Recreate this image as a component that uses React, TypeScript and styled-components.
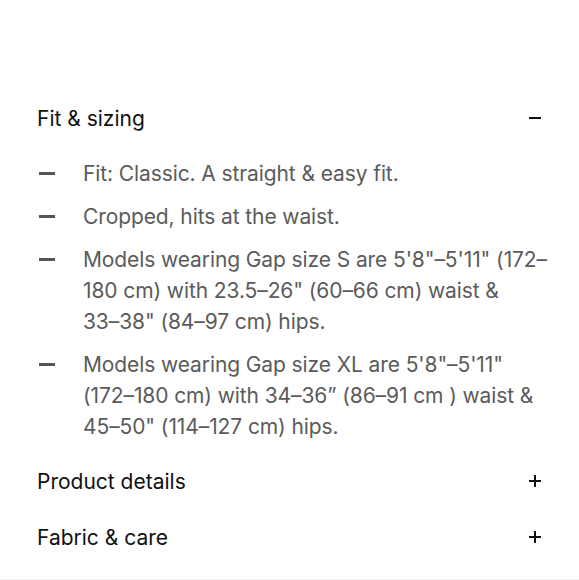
import React from "react";
import styled, { createGlobalStyle } from "styled-components";

const Global = createGlobalStyle`
  html, body { margin: 0; padding: 0; background: #fff; }
  body { font-family: Inter, "Liberation Sans", Arial, sans-serif; -webkit-font-smoothing: antialiased; }
`;

const Page = styled.div`
  width: 579px;
  height: 580px;
  box-sizing: border-box;
  border-bottom: 1px solid #efefef;
  padding: 90px 37px 0 37px;
  display: flex;
  flex-direction: column;
`;

const Section = styled.section`
  display: flex;
  flex-direction: column;
`;

const Header = styled.div`
  height: 56px;
  display: flex;
  align-items: center;
  justify-content: space-between;
`;

const Title = styled.h3`
  margin: 0;
  font-size: 21px;
  font-weight: 400;
  color: #111;
`;

const Toggle = styled.span<{ $open?: boolean }>`
  position: relative;
  width: 12px;
  height: 12px;
  margin-right: 1px;
  &::before, &::after {
    content: "";
    position: absolute;
    background: #111;
  }
  &::before {
    left: 0; right: 0; top: 5px; height: 2.4px;
  }
  &::after {
    display: ${(p) => (p.$open ? "none" : "block")};
    top: 0; bottom: 0; left: 5px; width: 2.4px;
  }
`;

const List = styled.ul`
  list-style: none;
  margin: 0 -16px 0 0;
  padding: 12px 0 11px 0;
  display: flex;
  flex-direction: column;
  gap: 12px;
`;

const Item = styled.li`
  display: grid;
  grid-template-columns: 46px 1fr;
  font-size: 21px;
  line-height: 31px;
  color: #5b5b5b;
  letter-spacing: -0.1px;
`;

const Dash = styled.span`
  display: flex;
  align-items: center;
  height: 31px;
  &::before {
    content: "";
    width: 16px;
    height: 2.4px;
    margin-left: 2px;
    background: #555;
  }
`;

const Line = styled.span`
  display: block;
`;

const items: string[][] = [
  ["Fit: Classic. A straight & easy fit."],
  ["Cropped, hits at the waist."],
  [
    "Models wearing Gap size S are 5'8\"–5'11\" (172–",
    "180 cm) with 23.5–26\" (60–66 cm) waist &",
    "33–38\" (84–97 cm) hips.",
  ],
  [
    "Models wearing Gap size XL are 5'8\"–5'11\"",
    "(172–180 cm) with 34–36” (86–91 cm ) waist &",
    "45–50\" (114–127 cm) hips.",
  ],
];

export default function App() {
  return (
    <>
      <Global />
      <Page>
        <Section>
          <Header>
            <Title>Fit &amp; sizing</Title>
            <Toggle $open />
          </Header>
          <List>
            {items.map((lines, i) => (
              <Item key={i}>
                <Dash />
                <span>
                  {lines.map((l, j) => (
                    <Line key={j}>{l}</Line>
                  ))}
                </span>
              </Item>
            ))}
          </List>
        </Section>
        <Section>
          <Header>
            <Title>Product details</Title>
            <Toggle />
          </Header>
        </Section>
        <Section>
          <Header>
            <Title>Fabric &amp; care</Title>
            <Toggle />
          </Header>
        </Section>
      </Page>
    </>
  );
}
